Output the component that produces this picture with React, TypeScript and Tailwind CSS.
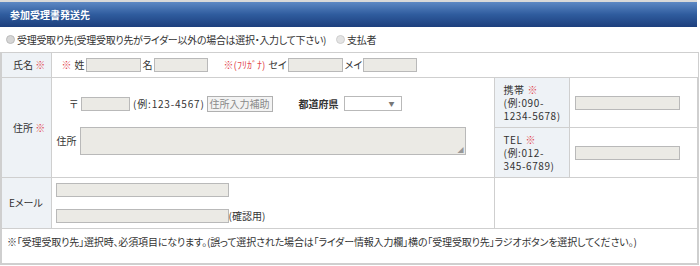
import React from 'react';

const Req = () => <span className="text-[#e2474f]">※</span>;

const Field = ({ w, h = 'h-[14px]' }: { w: string; h?: string }) => (
  <span className={`inline-block ${w} ${h} bg-[#ebeae5] border border-[#b9b9b9] align-middle`} />
);

export default function App() {
  return (
    <div
      className="w-[700px] h-[266px] bg-white text-[10px] leading-[13px] text-[#333] [font-feature-settings:'palt']"
      style={{ fontFamily: '"Noto Sans CJK JP", "Noto Sans", sans-serif' }}
    >
      <div className="w-[697px]">
        <div className="h-[27px] border-t-2 border-[#d9d9d9] bg-gradient-to-b from-[#5d88c4] via-[#2f5c9e] to-[#1d3f7d] flex items-center pl-[10px]">
          <span className="text-white font-bold text-[10px]">参加受理書発送先</span>
        </div>

        <table className="w-[697px] table-fixed border-collapse">
          <colgroup>
            <col className="w-[50px]" />
            <col className="w-[443px]" />
            <col className="w-[75px]" />
            <col className="w-[129px]" />
          </colgroup>
          <tbody>
            <tr className="h-[25px]">
              <td colSpan={4} className="border-b border-[#cfcfcf] px-[5px]">
                <div className="flex items-center text-[10px] tracking-[-0.3px]">
                  <span className="inline-block w-[9px] h-[9px] rounded-full bg-[#d6d6d6] border border-[#bcbcbc] mr-[2px]" />
                  <span>受理受取り先(受理受取り先がライダー以外の場合は選択・入力して下さい)</span>
                  <span className="inline-block w-[9px] h-[9px] rounded-full bg-[#e4e4e4] border border-[#cfcfcf] ml-[10px] mr-[2px]" />
                  <span>支払者</span>
                </div>
              </td>
            </tr>
            <tr className="h-[25px]">
              <td className="border border-l-2 border-[#cfcfcf] bg-[#eef2f6] pl-[11px]">
                氏名 <Req />
              </td>
              <td colSpan={3} className="border border-[#cfcfcf] pl-[10px]">
                <div className="flex items-center">
                  <Req />
                  <span className="ml-[3px] mr-[1px]">姓</span>
                  <Field w="w-[55px]" />
                  <span className="ml-[2px] mr-[1px]">名</span>
                  <Field w="w-[54px]" />
                  <span className="ml-[16px] text-[#e2474f]">※(ﾌﾘｶﾞﾅ)</span>
                  <span className="ml-[3px] mr-[1px]">セイ</span>
                  <Field w="w-[55px]" />
                  <span className="ml-[2px] mr-[1px]">メイ</span>
                  <Field w="w-[54px]" />
                </div>
              </td>
            </tr>
            <tr className="h-[50px]">
              <td rowSpan={2} className="border border-l-2 border-[#cfcfcf] bg-[#eef2f6] pl-[11px]">
                住所 <Req />
              </td>
              <td rowSpan={2} className="border border-[#cfcfcf] pl-[5px] align-top">
                <div className="flex items-center mt-[18px]">
                  <span className="ml-[13px] mr-[3px]">〒</span>
                  <Field w="w-[49px]" />
                  <span className="ml-[3px] tracking-[0.8px]">(例:123-4567)</span>
                  <span className="ml-[2px] h-[16px] px-[2px] border border-[#b0b0b0] bg-[#f3f3f3] text-[#8a8a8a] flex items-center">住所入力補助</span>
                  <span className="ml-[26px] mr-[5px] font-bold">都道府県</span>
                  <span className="w-[58px] h-[15px] border border-[#b9b9b9] bg-white flex items-center justify-end pr-[6px] text-[6px] text-[#777]">▼</span>
                </div>
                <div className="flex items-start mt-[15px]">
                  <span className="mr-[3px] mt-[7px]">住所</span>
                  <span className="relative inline-block w-[386px] h-[28px] bg-[#ebeae5] border border-[#b9b9b9]">
                    <span className="absolute right-[1px] bottom-[1px] text-[6px] leading-[6px] text-[#999]">◢</span>
                  </span>
                </div>
              </td>
              <td className="border border-[#cfcfcf] bg-[#eef2f6] pl-[9px] leading-[13px] tracking-[0.6px]">
                <div>携帯 <Req /></div>
                <div>(例:090-</div>
                <div>1234-5678)</div>
              </td>
              <td className="border border-r-2 border-[#cfcfcf] pl-[5px]">
                <Field w="w-[105px]" />
              </td>
            </tr>
            <tr className="h-[50px]">
              <td className="border border-[#cfcfcf] bg-[#eef2f6] pl-[9px] leading-[13px] tracking-[0.6px]">
                <div>TEL <Req /></div>
                <div>(例:012-</div>
                <div>345-6789)</div>
              </td>
              <td className="border border-r-2 border-[#cfcfcf] pl-[5px]">
                <Field w="w-[105px]" />
              </td>
            </tr>
            <tr className="h-[51px]">
              <td className="border border-l-2 border-[#cfcfcf] bg-[#eef2f6] pl-[7px]">Eメール</td>
              <td className="border border-[#cfcfcf] pl-[4px]">
                <div className="flex flex-col gap-[12px]">
                  <Field w="w-[173px]" />
                  <div className="flex items-center">
                    <Field w="w-[173px]" />
                    <span>(確認用)</span>
                  </div>
                </div>
              </td>
              <td colSpan={2} className="border border-r-2 border-[#cfcfcf]" />
            </tr>
            <tr className="h-[36px]">
              <td colSpan={4} className="border border-x-2 border-b-2 border-[#cfcfcf] pl-[5px] align-top pt-[6px] tracking-[-0.15px]">
                ※「受理受取り先」選択時、必須項目になります。(誤って選択された場合は「ライダー情報入力欄」横の「受理受取り先」ラジオボタンを選択してください。)
              </td>
            </tr>
          </tbody>
        </table>
      </div>
    </div>
  );
}
